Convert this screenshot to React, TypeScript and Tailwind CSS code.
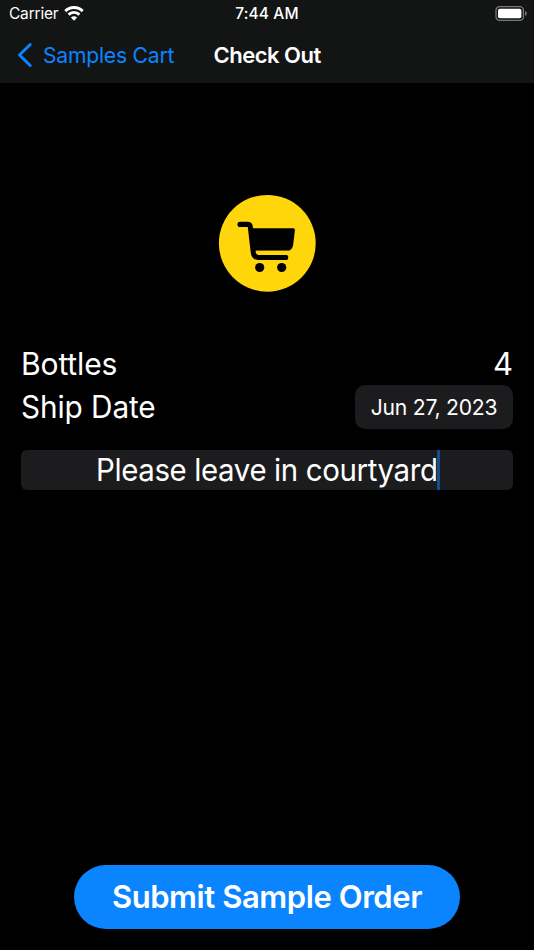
import React from "react";

function WifiIcon() {
  return (
    <svg className="ml-[6px] h-[15px] w-[20px]" viewBox="0 0 20 15" fill="none" stroke="#fff" strokeWidth="2.9">
      <path d="M1.3 5.1a12.4 12.4 0 0 1 17.4 0" />
      <path d="M4.6 8.6a7.7 7.7 0 0 1 10.8 0" />
      <path d="M10 14.7 6.9 11.6a4.5 4.5 0 0 1 6.2 0Z" fill="#fff" stroke="none" />
    </svg>
  );
}

function BatteryIcon() {
  return (
    <svg className="h-[15px] w-[32px]" viewBox="0 0 32 15" fill="none">
      <rect x="1" y="0.7" width="27.4" height="13.6" rx="3.6" stroke="#777978" strokeWidth="1.3" />
      <rect x="3" y="2.7" width="23.4" height="9.6" rx="1.8" fill="#fff" />
      <path d="M30 5.1c1.1.4 1.8 1.3 1.8 2.4s-.7 2-1.8 2.4Z" fill="#777978" />
    </svg>
  );
}

function CartBadge() {
  return (
    <svg className="h-[98px] w-[98px]" viewBox="0 0 98 98">
      <circle cx="49.3" cy="49.3" r="48.4" fill="#ffd60a" />
      <path
        d="M22 30.4h7.5q2.5 0 2.8 2.4l3 25.7q.7 4.900 5 4.900h27.400"
        fill="none"
        stroke="#000"
        strokeWidth="5.1"
        strokeLinecap="round"
        strokeLinejoin="round"
      />
      <path d="M33 34.3h42.2q1.9 0 1.7 2l-1.7 14.4q-.8 6-6.4 6H36Z" fill="#000" />
      <path d="M37.9 56.7h32v4.2H41.2q-2.9 0-3.3-4.2Z" fill="#ffd60a" />
      <circle cx="41.7" cy="73.5" r="4.6" fill="#000" />
      <circle cx="63.7" cy="73.5" r="4.6" fill="#000" />
    </svg>
  );
}

export default function App() {
  return (
    <div className="flex h-[950px] w-[534px] flex-col overflow-hidden whitespace-nowrap bg-black font-[Inter,sans-serif] text-white">
      <header className="flex h-[83px] flex-col bg-[#131514]">
        <div className="grid h-[27px] grid-cols-3 items-center pl-[9px] pr-[7px] text-[15.5px]">
          <div className="flex items-center">
            <span className="w-[49px] pt-px tracking-[-0.2px]">Carrier</span>
            <WifiIcon />
          </div>
          <span className="pr-[2px] pt-px text-center font-medium tracking-[0.12px]">7:44 AM</span>
          <div className="flex justify-end">
            <BatteryIcon />
          </div>
        </div>
        <div className="flex h-[55px] items-center pl-[17px] text-[22px]">
          <svg className="h-[26px] w-[16px]" viewBox="0 0 16 26" fill="none" stroke="#0a84ff" strokeWidth="3" strokeLinecap="round" strokeLinejoin="round">
            <path d="M13.2 2.5 2.5 13 13.2 23.5" />
          </svg>
          <span className="ml-[10px] w-[170.5px] origin-left scale-x-[0.96] pt-px tracking-[-0.23px] text-[#0a84ff]">Samples Cart</span>
          <h1 className="pt-px font-semibold tracking-[-0.5px]">Check Out</h1>
        </div>
      </header>
      <main className="flex flex-1 flex-col items-center px-[21px] pt-[111px]">
        <CartBadge />
        <div className="mt-[51px] flex h-[42px] w-full items-center justify-between text-[31px]">
          <span className="origin-left scale-x-[0.97] pt-px tracking-[-0.15px]">Bottles</span>
          <span className="pt-px">4</span>
        </div>
        <div className="flex h-[44px] w-full items-center justify-between text-[31px]">
          <span className="origin-left scale-x-[0.96] pt-px tracking-[-0.1px]">Ship Date</span>
          <span className="flex h-[44px] w-[158px] items-center justify-center rounded-[10px] bg-[#1c1c1e] text-[22px]">
            <span className="scale-x-[0.96] tracking-[-0.23px]">Jun 27, 2023</span>
          </span>
        </div>
        <div className="mt-[20.5px] flex h-[40.5px] w-full items-center rounded-[6px] bg-[#1c1c1e] pl-[74.5px] text-[31px]">
          <span className="w-[341.5px] shrink-0 origin-left scale-x-[0.95] pt-px tracking-[-0.4px]">Please leave in courtyard</span>
          <span className="h-full w-[3px] bg-[#125095]" />
        </div>
        <button className="mb-[21px] mt-auto flex h-[64.5px] w-[386.5px] items-center justify-center rounded-full bg-[#0a84ff] text-[31px] font-semibold">
          <span className="tracking-[-0.42px]">Submit Sample Order</span>
        </button>
      </main>
    </div>
  );
}
